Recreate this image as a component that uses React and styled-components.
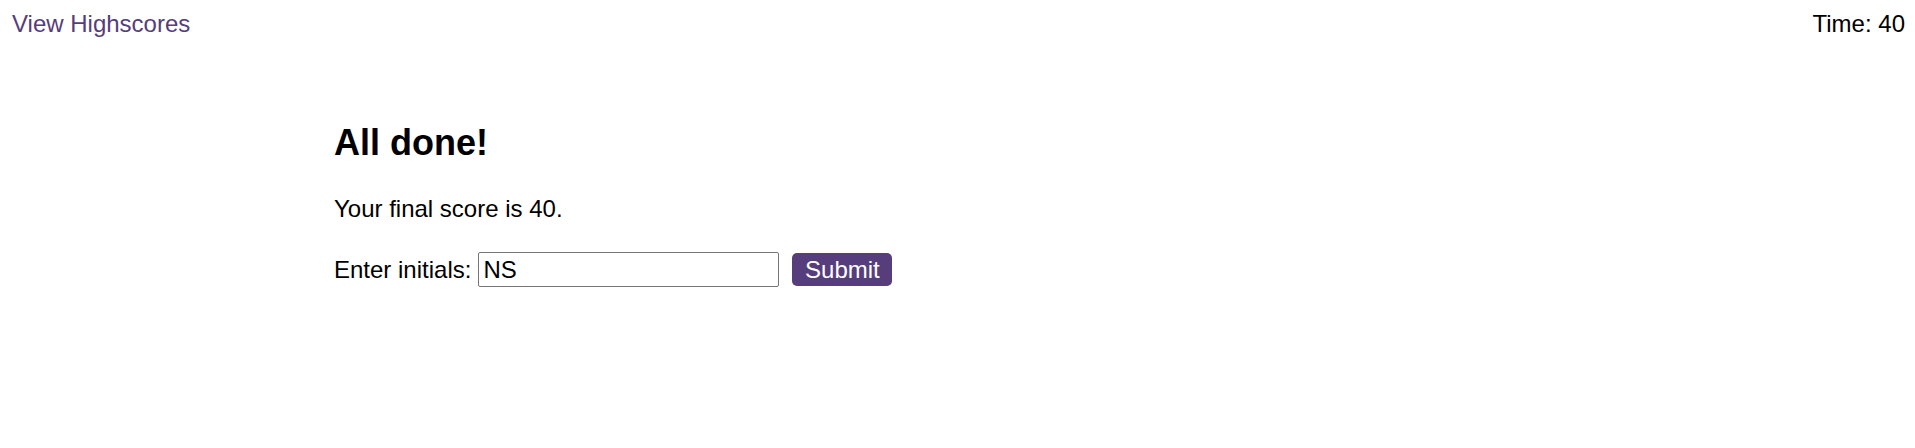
import React from "react";
import styled, { createGlobalStyle } from "styled-components";

const GlobalStyle = createGlobalStyle`
  html, body {
    margin: 0;
    padding: 0;
    background: #ffffff;
  }
  body {
    font-family: "Liberation Sans", Arial, sans-serif;
    font-size: 24px;
    color: #000000;
  }
`;

const Header = styled.header`
  display: flex;
  justify-content: space-between;
  align-items: center;
  padding: 10px 10px 0 12px;
`;

const HighscoreLink = styled.a`
  color: #563d7c;
  text-decoration: none;
  cursor: pointer;
`;

const Timer = styled.div`
  color: #000000;
`;

const Main = styled.main`
  padding-left: 334px;
  padding-top: 84px;
`;

const Title = styled.h2`
  font-size: 36px;
  font-weight: bold;
  margin: 0 0 31px;
`;

const Score = styled.p`
  margin: 0 0 29px;
`;

const Form = styled.form`
  display: flex;
  align-items: center;
`;

const Label = styled.label`
  margin-right: 7px;
`;

const Input = styled.input`
  box-sizing: border-box;
  width: 301px;
  height: 35px;
  padding: 0 4px;
  border: 1px solid #767676;
  border-radius: 2px;
  font-family: "Liberation Sans", Arial, sans-serif;
  font-size: 24px;
  color: #000000;
  outline: none;
`;

const SubmitButton = styled.button`
  box-sizing: border-box;
  margin-left: 13px;
  width: 100px;
  height: 33px;
  padding: 0;
  border: none;
  border-radius: 5px;
  background: #563d7c;
  color: #ffffff;
  font-family: "Liberation Sans", Arial, sans-serif;
  font-size: 24px;
  cursor: pointer;
`;

export default function App() {
  return (
    <>
      <GlobalStyle />
      <Header>
        <HighscoreLink>View Highscores</HighscoreLink>
        <Timer>Time: 40</Timer>
      </Header>
      <Main>
        <Title>All done!</Title>
        <Score>Your final score is 40.</Score>
        <Form onSubmit={(e) => e.preventDefault()}>
          <Label htmlFor="initials">Enter initials:</Label>
          <Input id="initials" type="text" defaultValue="NS" />
          <SubmitButton type="submit">Submit</SubmitButton>
        </Form>
      </Main>
    </>
  );
}
